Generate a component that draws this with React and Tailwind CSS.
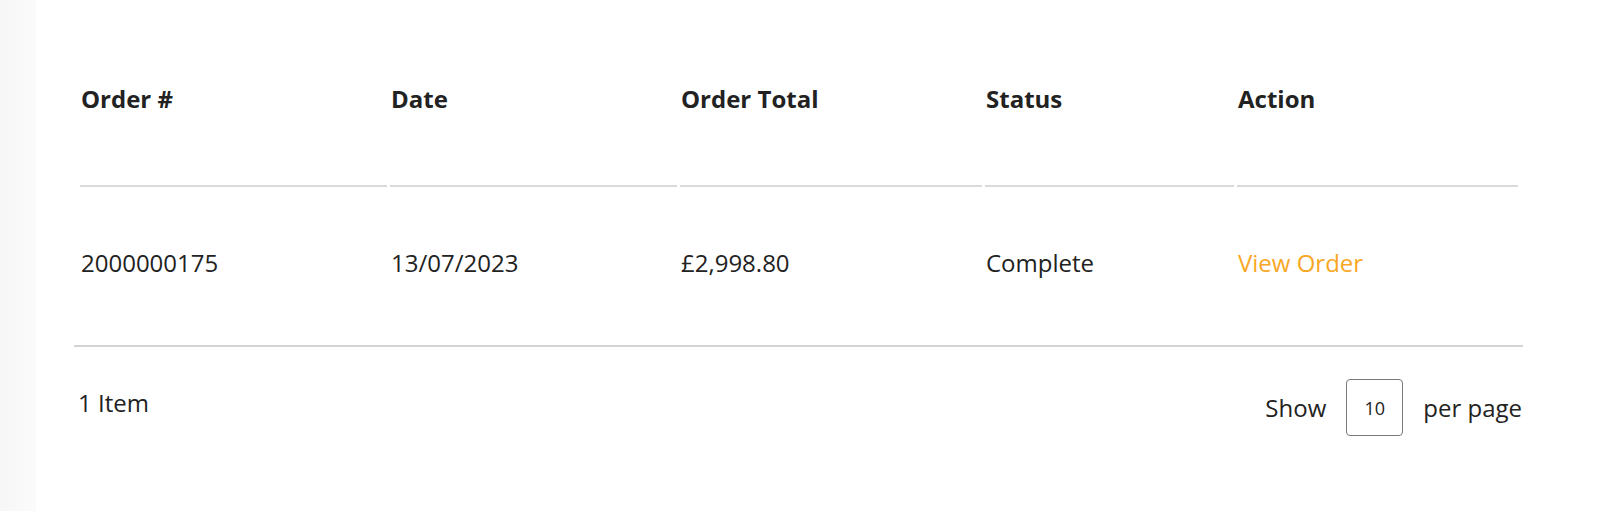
import React from "react";

const columns = [
  { key: "order", label: "Order #", width: "w-[307px]" },
  { key: "date", label: "Date", width: "w-[287px]" },
  { key: "total", label: "Order Total", width: "w-[302px]" },
  { key: "status", label: "Status", width: "w-[249px]" },
  { key: "action", label: "Action", width: "w-[281px]" },
];

const orders = [
  { id: "2000000175", date: "13/07/2023", total: "£2,998.80", status: "Complete" },
];

export default function App() {
  return (
    <div
      className="flex min-h-[511px] bg-white text-[#222]"
      style={{ fontFamily: "'Open Sans', Lato, sans-serif" }}
    >
      {/* left panel edge */}
      <div className="w-[36px] shrink-0 bg-gradient-to-r from-[#f7f7f7] to-[#fbfbfb]" />

      <div className="ml-[38px] w-[1449px]">
        {/* header */}
        <div className="flex gap-x-[3px] pl-[6px] pt-[84px]">
          {columns.map((col) => (
            <div key={col.key} className={`${col.width} shrink-0`}>
              <div className="pl-[1px] text-[24px] font-bold leading-[30px] text-[#222]">
                {col.label}
              </div>
              <div className="mt-[71px] h-[2px] bg-[#dadada]" />
            </div>
          ))}
        </div>

        {/* rows */}
        {orders.map((order) => (
          <div key={order.id} className="border-b-2 border-[#d4d4d4]">
            <div className="flex gap-x-[3px] pl-[6px] pt-[61px] pb-[67px] text-[24px] leading-[30px]">
              <div className="w-[307px] shrink-0 pl-[1px]">{order.id}</div>
              <div className="w-[287px] shrink-0 pl-[1px]">{order.date}</div>
              <div className="w-[302px] shrink-0 pl-[1px]">{order.total}</div>
              <div className="w-[249px] shrink-0 pl-[1px]">{order.status}</div>
              <div className="w-[281px] shrink-0 pl-[1px]">
                <a href="#" className="text-[#f8a724]">
                  View Order
                </a>
              </div>
            </div>
          </div>
        ))}

        {/* footer */}
        <div className="flex items-start justify-between pl-[4px] pr-[1px] pt-[32px] text-[24px] leading-[30px]">
          <div className="mt-[9px]">1 Item</div>
          <div className="flex items-center gap-[20px]">
            <span>Show</span>
            <div className="flex h-[57px] w-[57px] items-center justify-center rounded-[4px] border border-[#7a7a7a] text-[18px]">
              10
            </div>
            <span>per page</span>
          </div>
        </div>
      </div>
    </div>
  );
}
